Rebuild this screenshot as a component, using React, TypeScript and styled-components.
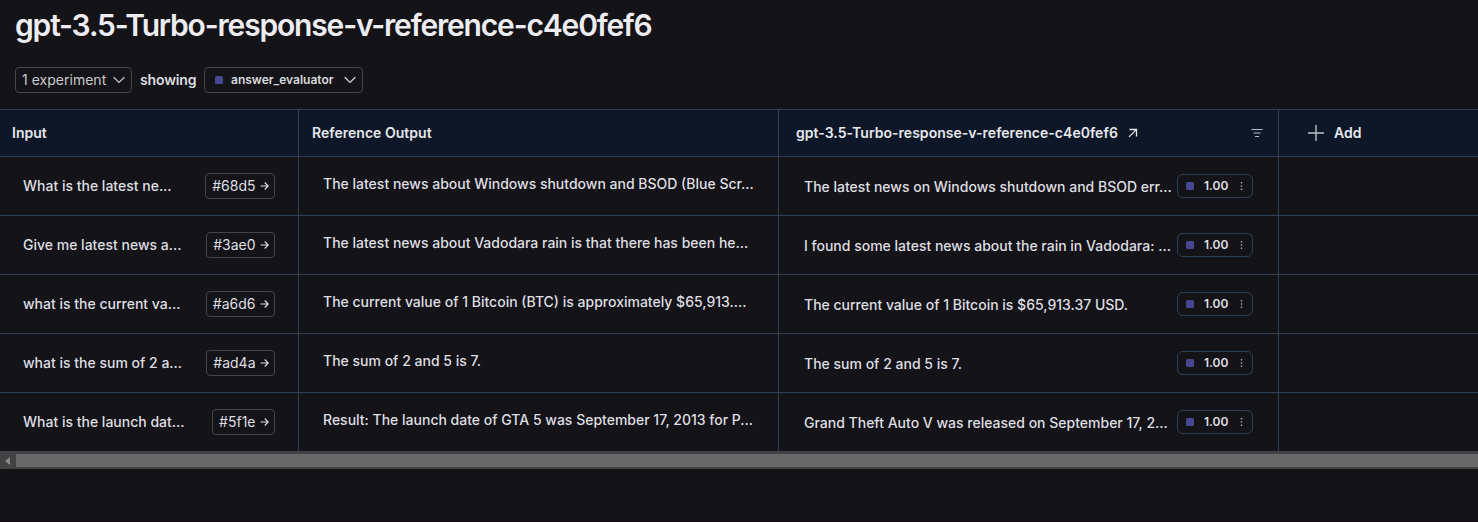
import React from "react";
import styled, { createGlobalStyle } from "styled-components";

const Global = createGlobalStyle`
  * { box-sizing: border-box; }
  body { margin: 0; background: #141317; }
`;

const line = "#2f3f54";

const Page = styled.main`
  height: 522px;
  overflow: hidden;
  background: #141317;
  border-bottom: 1px solid #0d080d;
  color: #dfdfe3;
  font-family: Inter, "Liberation Sans", sans-serif;
  font-size: 14px;
  font-weight: 500;
  line-height: 20px;
`;

const Title = styled.h1`
  margin: 0;
  padding: 7px 15px 0;
  height: 67px;
  font-size: 30px;
  line-height: 36px;
  font-weight: 600;
  letter-spacing: -1.17px;
  color: #ececf1;
`;

const Toolbar = styled.div`
  display: flex;
  align-items: center;
  height: 42px;
  padding: 0 15px 16px;
  gap: 8px;
`;

const ToolbarText = styled.span`
  width: 56px;
  font-weight: 600;
  letter-spacing: -0.15px;
  white-space: nowrap;
`;

const Select = styled.button<{ $width: number; $small?: boolean }>`
  display: flex;
  align-items: center;
  justify-content: space-between;
  width: ${(p) => p.$width}px;
  height: 26px;
  padding: ${(p) => (p.$small ? "0 6px 0 10px" : "0 6px")};
  border: 1px solid #45444a;
  border-radius: 4px;
  background: transparent;
  color: ${(p) => (p.$small ? "#d9d9dd" : "#c9c9cd")};
  font-family: inherit;
  font-size: ${(p) => (p.$small ? 12 : 14)}px;
  font-weight: ${(p) => (p.$small ? 600 : 400)};
  letter-spacing: ${(p) => (p.$small ? 0 : "0.02px")};
  line-height: 20px;
  white-space: nowrap;
`;

const Swatch = styled.span`
  flex: none;
  width: 8px;
  height: 8px;
  margin-right: 8px;
  border-radius: 1.5px;
  background: #454791;
`;

const SelectLabel = styled.span`
  display: flex;
  align-items: center;
`;

const Table = styled.div`
  display: grid;
  grid-template-columns: 299px 480px 500px 1fr;
  grid-template-rows: 47px repeat(4, 59px) 58px;
  height: 342px;
  border-top: 1px solid ${line};
`;

const HeadCell = styled.div<{ $left: number; $last?: boolean }>`
  display: flex;
  align-items: center;
  padding: 0 15px 0 ${(p) => p.$left}px;
  border-bottom: 1px solid ${line};
  border-right: ${(p) => (p.$last ? "none" : `1px solid ${line}`)};
  background: #0e1728;
  color: #e6e8ec;
  font-weight: 600;
  letter-spacing: 0.03px;
`;

const AddLabel = styled.span`
  margin-left: 10px;
`;

const Cell = styled.div<{ $left: number; $right: number; $end?: boolean; $last?: boolean; $lift?: number }>`
  display: flex;
  align-items: center;
  min-width: 0;
  padding: 0 ${(p) => p.$right}px ${(p) => p.$lift ?? 0}px ${(p) => p.$left}px;
  border-bottom: ${(p) => (p.$end ? "none" : `1px solid ${line}`)};
  border-right: ${(p) => (p.$last ? "none" : `1px solid ${line}`)};
`;

const Text = styled.span<{ $top?: number }>`
  flex: 1;
  min-width: 0;
  padding-top: ${(p) => p.$top ?? 0}px;
  white-space: nowrap;
`;

const Tag = styled.span`
  display: flex;
  align-items: center;
  gap: 4px;
  height: 26px;
  padding: 0 5.5px 0 6px;
  border: 1px solid #45444a;
  border-radius: 4px;
  font-weight: 400;
`;

const Score = styled.span`
  display: flex;
  align-items: center;
  width: 76px;
  height: 24px;
  padding: 0 9px 0 8px;
  border: 1px solid ${line};
  border-radius: 6px;
  font-size: 12px;
  font-weight: 600;
`;

const ScoreValue = styled.span`
  flex: 1;
  padding-left: 2px;
`;

const Scrollbar = styled.div`
  display: flex;
  align-items: center;
  height: 18px;
  border-top: 1px solid #3c434b;
  background: #424242;
`;

const ScrollArrow = styled.span`
  display: flex;
  width: 16px;
  padding-right: 2px;
  justify-content: center;
`;

const ScrollThumb = styled.span`
  flex: 1;
  height: 13px;
  background: #686868;
`;

const Spacer = styled.span`
  flex: 1;
`;

const Icon = styled.svg<{ $gap?: number }>`
  display: block;
  flex: none;
  margin-left: ${(p) => p.$gap ?? 0}px;
  fill: none;
  stroke: currentColor;
`;

const Chevron = () => (
  <Icon width="12" height="12" viewBox="0 0 12 12" strokeWidth="1.2" strokeLinecap="round">
    <path d="M1 3.5 6 8.5 11 3.5" />
  </Icon>
);

const rows = [
  { input: "What is the latest ne...", id: "#68d5", reference: "The latest news about Windows shutdown and BSOD (Blue Scr...", output: "The latest news on Windows shutdown and BSOD err..." },
  { input: "Give me latest news a...", id: "#3ae0", reference: "The latest news about Vadodara rain is that there has been he...", output: "I found some latest news about the rain in Vadodara: ..." },
  { input: "what is the current va...", id: "#a6d6", reference: "The current value of 1 Bitcoin (BTC) is approximately $65,913....", output: "The current value of 1 Bitcoin is $65,913.37 USD." },
  { input: "what is the sum of 2 a...", id: "#ad4a", reference: "The sum of 2 and 5 is 7.", output: "The sum of 2 and 5 is 7." },
  { input: "What is the launch dat...", id: "#5f1e", reference: "Result: The launch date of GTA 5 was September 17, 2013 for P...", output: "Grand Theft Auto V was released on September 17, 2..." },
];

export default function App() {
  return (
    <Page>
      <Global />
      <Title>gpt-3.5-Turbo-response-v-reference-c4e0fef6</Title>
      <Toolbar>
        <Select $width={117}>
          1 experiment
          <Chevron />
        </Select>
        <ToolbarText>showing</ToolbarText>
        <Select $width={159} $small>
          <SelectLabel>
            <Swatch />
            answer_evaluator
          </SelectLabel>
          <Chevron />
        </Select>
      </Toolbar>
      <Table>
        <HeadCell $left={12}>Input</HeadCell>
        <HeadCell $left={13}>Reference Output</HeadCell>
        <HeadCell $left={17}>
          gpt-3.5-Turbo-response-v-reference-c4e0fef6
          <Icon $gap={10} width="10" height="10" viewBox="0 0 10 10" strokeWidth="1.3">
            <path d="M1 8.9 8.3 1.6M1.5 1.5H8.5V8.5" />
          </Icon>
          <Spacer />
          <Icon width="12" height="10" viewBox="0 0 12 10" strokeWidth="1.2" color="#b9bec8">
            <path d="M.5 1.5h11M2.5 5h7M4 8.5h4" />
          </Icon>
        </HeadCell>
        <HeadCell $left={29} $last>
          <Icon width="16" height="16" viewBox="0 0 16 16" strokeWidth="1.4" color="#b9bec8">
            <path d="M8 0v16M0 8h16" />
          </Icon>
          <AddLabel>Add</AddLabel>
        </HeadCell>
        {rows.map((row, i) => {
          const end = i === rows.length - 1;
          return (
            <React.Fragment key={row.id}>
              <Cell $left={23} $right={23} $end={end}>
                <Text>{row.input}</Text>
                <Tag>
                  {row.id}
                  <Icon width="9" height="10" viewBox="0 0 9 10" strokeWidth="1.1">
                    <path d="M.5 5h7.5M4.7 1.5 8.2 5 4.7 8.5" />
                  </Icon>
                </Tag>
              </Cell>
              <Cell $left={24} $right={16} $end={end} $lift={4}>
                <Text>{row.reference}</Text>
              </Cell>
              <Cell $left={25} $right={25} $end={end}>
                <Text $top={2}>{row.output}</Text>
                <Score>
                  <Swatch />
                  <ScoreValue>1.00</ScoreValue>
                  <Icon width="3" height="10" viewBox="0 0 3 10" color="#a7abb4">
                    <path d="M1.5 1v1.5M1.5 4.2v1.5M1.5 7.5V9" strokeWidth="1.4" />
                  </Icon>
                </Score>
              </Cell>
              <Cell $left={0} $right={0} $end={end} $last />
            </React.Fragment>
          );
        })}
      </Table>
      <Scrollbar>
        <ScrollArrow>
          <Icon width="5" height="8" viewBox="0 0 5 8">
            <path d="M5 0v8L0 4z" fill="#8b8b8b" stroke="none" />
          </Icon>
        </ScrollArrow>
        <ScrollThumb />
      </Scrollbar>
    </Page>
  );
}
